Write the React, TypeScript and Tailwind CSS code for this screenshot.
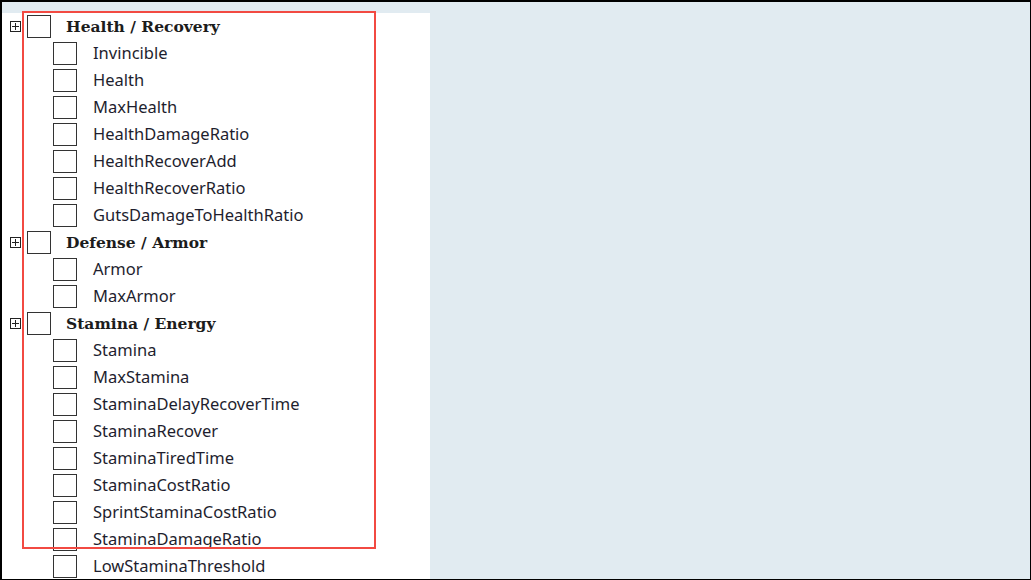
import React from 'react';

type Group = { title: string; items: string[] };

const groups: Group[] = [
  {
    title: 'Health / Recovery',
    items: [
      'Invincible',
      'Health',
      'MaxHealth',
      'HealthDamageRatio',
      'HealthRecoverAdd',
      'HealthRecoverRatio',
      'GutsDamageToHealthRatio',
    ],
  },
  { title: 'Defense / Armor', items: ['Armor', 'MaxArmor'] },
  {
    title: 'Stamina / Energy',
    items: [
      'Stamina',
      'MaxStamina',
      'StaminaDelayRecoverTime',
      'StaminaRecover',
      'StaminaTiredTime',
      'StaminaCostRatio',
      'SprintStaminaCostRatio',
      'StaminaDamageRatio',
      'LowStaminaThreshold',
    ],
  },
];

function Box() {
  return <div className="w-[24px] h-[23px] border-[1.5px] border-[#333333] bg-white shrink-0" />;
}

function Expander() {
  return (
    <div className="relative w-[11px] h-[11px] border border-[#222222] bg-white shrink-0">
      <div className="absolute left-[1px] right-[1px] top-[4px] h-px bg-[#222222]" />
      <div className="absolute top-[1px] bottom-[1px] left-[4px] w-px bg-[#222222]" />
    </div>
  );
}

export default function App() {
  return (
    <div className="w-[1031px] h-[580px] overflow-hidden bg-black border-t-2 border-l-2 border-r border-b border-black">
      <div className="relative w-full h-full bg-[#e1ebf1] pt-[11px]">
        <div className="w-[428px] h-full bg-white">
          {groups.map((g) => (
            <div key={g.title}>
              <div className="flex items-center h-[27px]">
                <div className="ml-[8px]">
                  <Expander />
                </div>
                <div className="ml-[6px]">
                  <Box />
                </div>
                <span
                  className="ml-[15px] text-[15.5px] font-bold text-[#1c1c1c]"
                  style={{ fontFamily: '"DejaVu Serif", "Liberation Serif", serif' }}
                >
                  {g.title}
                </span>
              </div>
              {g.items.map((it) => (
                <div key={it} className="flex items-center h-[27px]">
                  <div className="ml-[51px]">
                    <Box />
                  </div>
                  <span
                    className="ml-[16px] text-[16.5px] text-[#1e1e2e]"
                    style={{ fontFamily: '"Noto Sans", "Open Sans", sans-serif' }}
                  >
                    {it}
                  </span>
                </div>
              ))}
            </div>
          ))}
        </div>
        <div className="absolute left-[20px] top-[9px] w-[354px] h-[538px] border-2 border-[#f24a42] pointer-events-none" />
      </div>
    </div>
  );
}
